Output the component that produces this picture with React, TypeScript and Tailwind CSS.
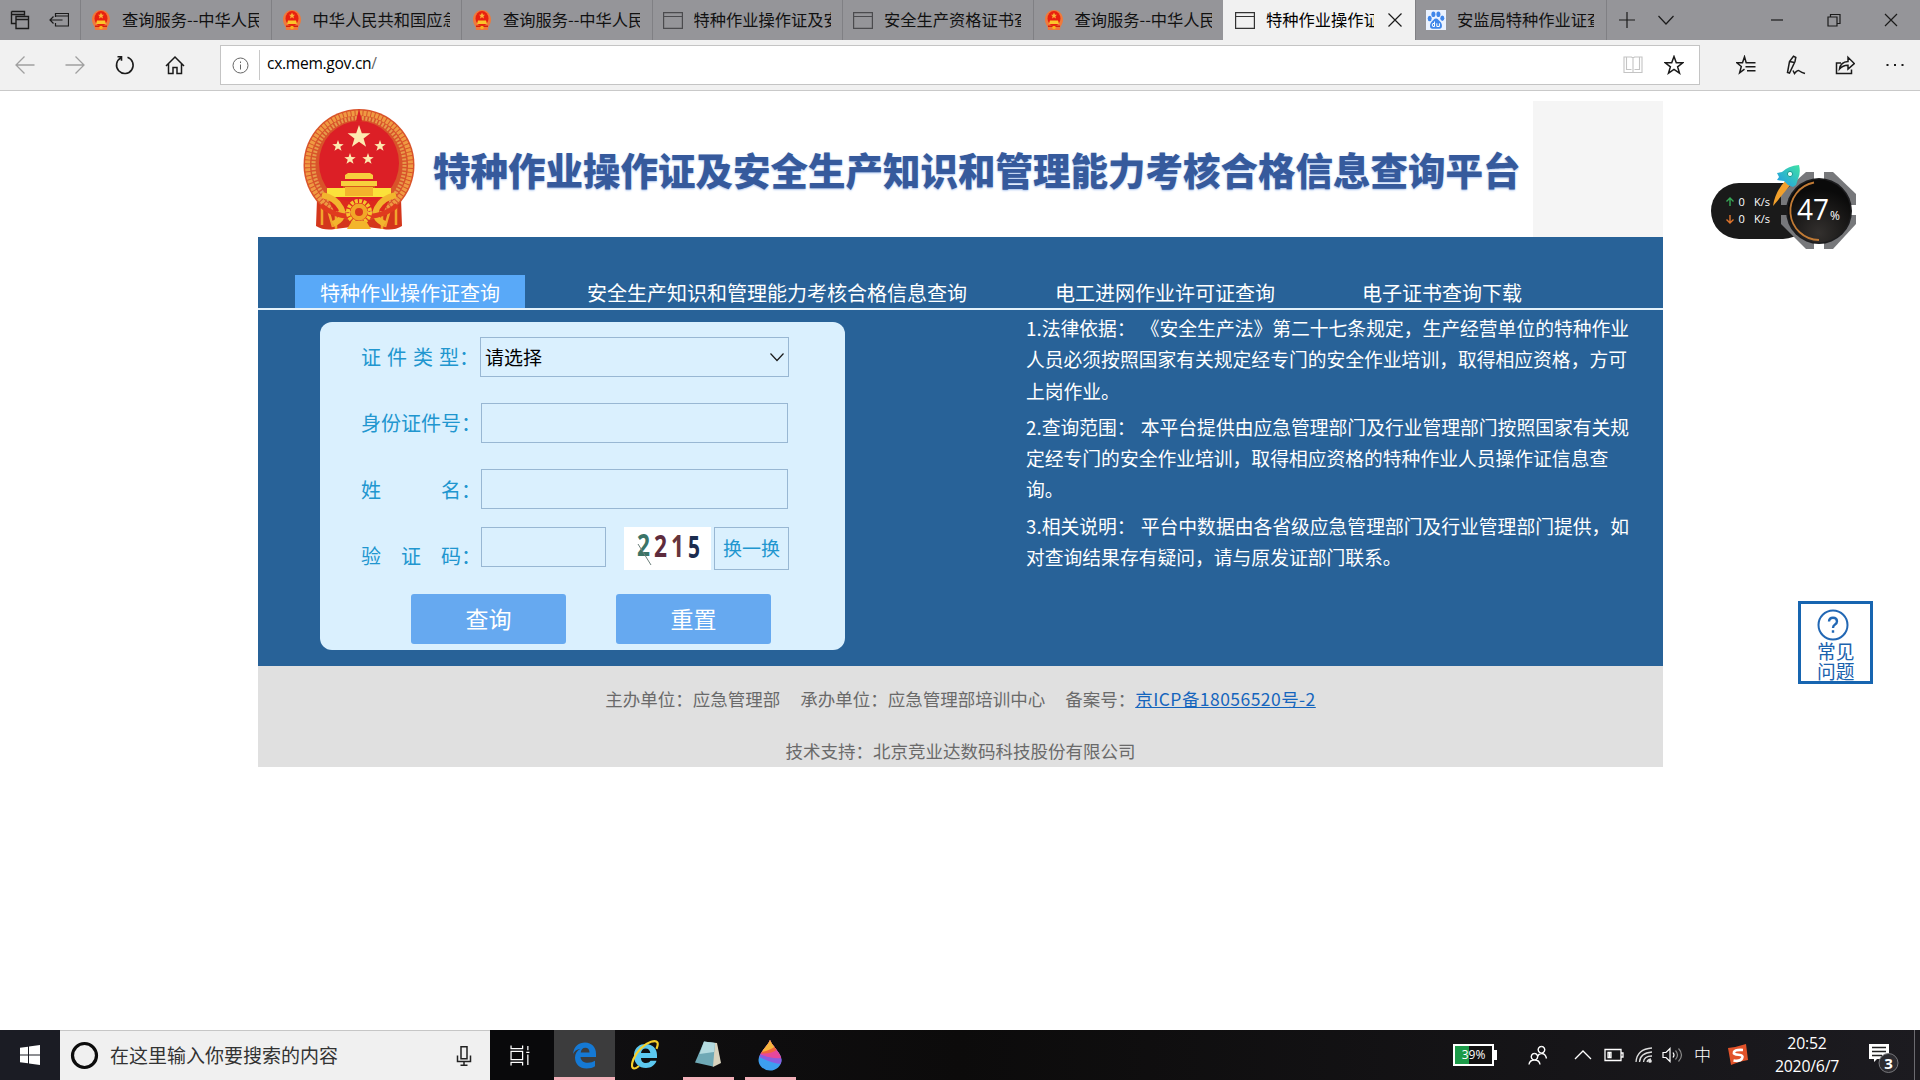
import { useState } from 'react';
import type { ReactNode } from 'react';

type TabIcon = 'emblem' | 'page' | 'baidu';

interface BrowserTab {
  title: string;
  icon: TabIcon;
  active?: boolean;
}

const browserTabs: BrowserTab[] = [
  { title: '查询服务--中华人民', icon: 'emblem' },
  { title: '中华人民共和国应急', icon: 'emblem' },
  { title: '查询服务--中华人民', icon: 'emblem' },
  { title: '特种作业操作证及安', icon: 'page' },
  { title: '安全生产资格证书查', icon: 'page' },
  { title: '查询服务--中华人民', icon: 'emblem' },
  { title: '特种作业操作证', icon: 'page', active: true },
  { title: '安监局特种作业证查', icon: 'baidu' },
];

const notices = [
  ['1.法律依据： 《安全生产法》第二十七条规定，生产经营单位的特种作业', '人员必须按照国家有关规定经专门的安全作业培训，取得相应资格，方可', '上岗作业。'],
  ['2.查询范围： 本平台提供由应急管理部门及行业管理部门按照国家有关规', '定经专门的安全作业培训，取得相应资格的特种作业人员操作证信息查', '询。'],
  ['3.相关说明： 平台中数据由各省级应急管理部门及行业管理部门提供，如', '对查询结果存有疑问，请与原发证部门联系。'],
];

const STAR = 'M0,-10 L2.35,-3.2 9.5,-3.1 3.8,1.2 5.9,8.1 0,4 -5.9,8.1 -3.8,1.2 -9.5,-3.1 -2.35,-3.2Z';

function SmallEmblem() {
  return (
    <svg width="20" height="20" viewBox="0 0 20 20">
      <path d="M10 0C4.500 0 1 4.500 1 9.500c0 3 1.200 5.500 2.500 7L4 20h12l.5-3.500c1.300-1.500 2.500-4 2.500-7C19 4.500 15.500 0 10 0z" fill="#ef7a3c" />
      <ellipse cx="10" cy="8.500" rx="6.500" ry="7.500" fill="#e8200f" />
      <path d="M10 2.500l1 2.200h2l-1.600 1.500.6 2.200-2-1.200-2 1.200.6-2.200L7 4.700h2z" fill="#fbb338" />
      <path d="M6 10.500h8l1 3.500H5z" fill="#fbc52c" />
      <path d="M4 15.500h12v1.500H4z" fill="#d81f0a" />
      <circle cx="10" cy="17.500" r="1.800" fill="#f9b21e" />
    </svg>
  );
}

function Emblem() {
  return (
    <svg width="112" height="122" viewBox="0 0 112 122" className="shrink-0">
      <path d="M14 90L13 117q8 5 19 3l24-3 24 3q11 2 19-3l-1-27z" fill="#d4361c" />
      <path d="M19 98v18M24 97l6 21M33 106v14M93 98v18M88 97l-6 21M79 106v14" stroke="#f2a52d" strokeWidth="2.500" />
      <ellipse cx="56" cy="56" rx="55.500" ry="56" fill="#d9532a" />
      <ellipse cx="56" cy="56" rx="51.500" ry="52" fill="none" stroke="#ef9a42" strokeWidth="5" strokeDasharray="3 1" />
      <ellipse cx="56" cy="56" rx="45.500" ry="47" fill="none" stroke="#e79a4a" strokeWidth="4" strokeDasharray="2 1.500" />
      <ellipse cx="56" cy="54" rx="40" ry="42" fill="#dc1f26" />
      <path d="M56 0l3 12h-6z" fill="#dc1f26" />
      <g fill="#fdeab0">
        <path d={STAR} transform="translate(56,28) scale(1.200)" />
        <path d={STAR} transform="translate(35,37) scale(.6)" />
        <path d={STAR} transform="translate(77,37) scale(.6)" />
        <path d={STAR} transform="translate(47,50) scale(.6)" />
        <path d={STAR} transform="translate(65,50) scale(.6)" />
      </g>
      <path d="M42 66l3-2h22l3 2v4H42zM38 72h36v5H38z" fill="#f7cf3d" />
      <path d="M40 77h32v3H40z" fill="#d8591b" />
      <path d="M24 79h64v9H24z" fill="#fbe13a" />
      <path d="M42 78h28v9H42z" fill="#f3b22c" />
      <path d="M24 88l32 6 32-6-7 14H31z" fill="#dc2a1d" />
      <path d="M19 86q14 3 19 13T30 115M93 86q-14 3-19 13t8 16" fill="none" stroke="#f2b52e" strokeWidth="6" />
      <path d="M18 96q12 12 38 12t38-12" fill="none" stroke="#e03a1e" strokeWidth="5" />
      <circle cx="56" cy="103" r="11" fill="none" stroke="#f6c62e" strokeWidth="4" strokeDasharray="3 1.300" />
      <circle cx="56" cy="103" r="8.500" fill="#f1a727" />
      <circle cx="56" cy="103" r="4" fill="#d93a1b" />
      <path d="M49 112l-5 8h24l-5-8z" fill="#f3b52b" />
    </svg>
  );
}

function PageIcon({ active }: { active?: boolean }) {
  return (
    <svg width="20" height="18" viewBox="0 0 20 18" fill="none" stroke={active ? '#333' : '#4b4b4e'} strokeWidth="1.200">
      <path d="M.6 1.600h18.800v15.800H.6zM.6 5.500h18.800" />
    </svg>
  );
}

function BaiduIcon() {
  return (
    <svg width="20" height="20" viewBox="0 0 20 20">
      <rect width="20" height="20" fill="#eaf2ff" />
      <g fill="#3f86ea">
        <ellipse cx="3.700" cy="8.500" rx="2" ry="2.700" />
        <ellipse cx="7.400" cy="4.300" rx="2" ry="2.800" />
        <ellipse cx="12.400" cy="4.300" rx="2" ry="2.800" />
        <ellipse cx="16.300" cy="8.300" rx="2" ry="2.700" />
        <path d="M10 8.500c-2 0-2.800 2-4.500 3.600S3 18.800 6.500 18.800h7c3.500 0 2.700-5 1-6.700S12 8.500 10 8.500z" />
      </g>
      <path d="M8.500 11.500v5H6.800q-1.200-1.500 0-3h1.700M10.800 13.300v3.200h2.600v-3.200" fill="none" stroke="#fff" />
    </svg>
  );
}

function TabFavicon({ icon, active }: { icon: TabIcon; active?: boolean }) {
  if (icon === 'emblem') return <SmallEmblem />;
  if (icon === 'baidu') return <BaiduIcon />;
  return <PageIcon active={active} />;
}

/* Line icon on a 20x20 grid */
function Glyph({ d, color = '#1b1b1b', w = 1.3, size = 20 }: { d: string; color?: string; w?: number; size?: number }) {
  return (
    <svg width={size} height={size} viewBox="0 0 20 20" fill="none" stroke={color} strokeWidth={w} className="shrink-0">
      <path d={d} />
    </svg>
  );
}

function TabStrip() {
  return (
    <div className="flex h-10 bg-[#959599]">
      <div className="flex w-20 items-center gap-[19px] pl-[10px]">
        <Glyph d="M1.500 1.500h13v4M1.500 1.500v12h4M1.500 4.500h13M6 6.500h12.500v12H6zM6 9.500h12.500" w={1.4} />
        <Glyph d="M6.500 7V3.500h13v12.500h-13v-3M7 6h12.500M13.500 10H1M4.500 6.500L1 10l3.500 3.500" w={1.2} />
      </div>
      {browserTabs.map((tab, i) => (
        <div
          key={i}
          className={
            tab.active
              ? 'flex w-[192px] shrink-0 items-center bg-[#f1f1f1] pl-[12px]'
              : 'flex w-[190.5px] shrink-0 items-center border-l border-[#808084] pl-[10px]'
          }
        >
          <span className="w-5 shrink-0"><TabFavicon icon={tab.icon} active={tab.active} /></span>
          <span
            className={
              tab.active
                ? 'ml-[11px] w-[108px] overflow-hidden whitespace-nowrap pb-[2px] text-[16.25px] leading-[24px] text-black'
                : 'ml-[11px] w-[137px] overflow-hidden whitespace-nowrap pb-[2px] text-[16.25px] leading-[24px] text-[#111]'
            }
          >
            {tab.title}
          </span>
          {tab.active && <span className="ml-[11px]"><Glyph d="M3.500 3.500l13 13M16.500 3.500l-13 13" w={1.2} /></span>}
        </div>
      ))}
      <div className="flex flex-1 items-center border-l border-[#808084] pl-[10px]">
        <Glyph d="M10 2v16M2 10h16" w={1.2} />
        <span className="ml-[19px]"><Glyph d="M2.500 6l7.500 8 7.500-8" w={1.2} /></span>
        <span className="ml-[91px]"><Glyph d="M4 10h12" w={1.2} /></span>
        <span className="ml-[37px]"><Glyph d="M4 7h9v9H4zM6.500 7V4.500H16V13.500h-3" w={1.2} /></span>
        <span className="ml-[37px]"><Glyph d="M4 4l12 12M16 4L4 16" w={1.2} /></span>
      </div>
    </div>
  );
}

function Toolbar() {
  return (
    <div className="flex h-[51px] items-center border-b border-[#c9c9c9] bg-[#f1f1f1]">
      <div className="flex w-[220px] items-center gap-[30px] pl-[15px]">
        <Glyph d="M19.500 10H1M9.500 1.500L1 10l8.500 8.500" color="#a0a0a0" />
        <Glyph d="M.5 10H19M10.500 1.500L19 10l-8.500 8.500" color="#a0a0a0" />
        <Glyph d="M12.500 2.300a8.300 8.300 0 1 1-6.500 .5M2.500 1.800h4v4" w={1.6} />
        <Glyph d="M1 11l9-9 9 9M3.500 9v9.500h4.500v-6h4v6h4.500V9" w={1.5} />
      </div>
      <div className="flex h-[40px] w-[1480px] items-center border border-[#c4c4c4] bg-white pl-[11px]">
        <svg width="17" height="17" viewBox="0 0 17 17" fill="none" stroke="#666" className="shrink-0">
          <circle cx="8.500" cy="8.500" r="7.500" />
          <path d="M8.500 7.500v5M8.500 4.500v1.500" />
        </svg>
        <div className="ml-[10px] h-[30px] w-px bg-[#c8c8c8]" />
        <span className="ml-[7px] flex-1 pb-[5px] font-['Open_Sans','Noto_Sans',sans-serif] text-[15.6px] leading-[20px] tracking-[-0.3px] text-black">
          cx.mem.gov.cn<span className="text-[#666]">/</span>
        </span>
        <Glyph d="M1 2h7.500l1.500 1 1.500-1H19v15.500H1zM10 3v14.500M3.500 2v12.500h5M16.500 2v12.500h-5" color="#c4c4c4" w={1.1} />
        <span className="ml-[21px] mr-[15px]">
          <Glyph d="M10 1.500l2.300 6.200 6.500.1-5.200 4 1.900 6.300L10 14.400 4.500 18.100l1.900-6.300-5.200-4 6.500-.1z" w={1.5} />
        </span>
      </div>
      <div className="flex items-center gap-[29.500px] pl-[36px]">
        <Glyph d="M12 7.700h-1.800L8.500 1.800 6.500 7.700H.8l4.500 3.800-1.700 6.300 4.900-3.600M11 7.700h8.500M9.500 11.700h10M11 15.700h8.500" w={1.5} />
        <Glyph d="M1.500 17.500L3.500 6.500 7.500 1.200l2.300 1.300-.8 4L3.500 18l-2-.5zM3.500 6.500l5 1M7 15.500l1.500 3q3-4 5-2.500t5.500 2.500" w={1.5} />
        <Glyph d="M6 8H1.500v10.500h15v-4M4.500 14q1-7 8.500-7.500V2.300L19.300 8.500 13 14v-3.800Q8 10 4.500 14z" w={1.5} />
        <Glyph d="M1.500 10h2M9 10h2M16.500 10h2" w={2} />
      </div>
    </div>
  );
}

function FormRow({ label, wide, children, className }: { label: string; wide?: boolean; children: ReactNode; className: string }) {
  return (
    <div className={`flex ${className}`}>
      <div className="flex w-[120px] shrink-0 items-center text-[20px] leading-[28px] text-[#2196cf]">
        <span className={wide ? 'flex w-[98px] justify-between' : 'flex w-[100px] justify-between'}>
          {label.split('').map((c) => <span key={c}>{c}</span>)}
        </span>
        <span className="w-5">：</span>
      </div>
      {children}
    </div>
  );
}

function QueryForm() {
  const [idNo, setIdNo] = useState('');
  const [name, setName] = useState('');
  const [code, setCode] = useState('');

  const reset = () => {
    setIdNo('');
    setName('');
    setCode('');
  };

  return (
    <form className="ml-[62px] mt-[12px] h-[328px] w-[525px] rounded-[12px] bg-[#daf0fe] pl-[41px] pt-[15px]" onSubmit={(e) => e.preventDefault()}>
      <FormRow label="证件类型" wide className="h-[40px]">
        <div className="-ml-px flex w-[309px] items-center justify-between border border-[#98b7d3] pl-[4px] pr-[1px] text-[19px] text-black">
          <span>请选择</span>
          <Glyph d="M3.500 6.500L10 13.500l6.500-7" w={1.2} />
        </div>
      </FormRow>
      <FormRow label="身份证件号" className="mt-[26px] h-[40px]">
        <input value={idNo} onChange={(e) => setIdNo(e.target.value)} className="w-[307px] border border-[#98b7d3] px-2" />
      </FormRow>
      <FormRow label="姓名" className="mt-[26px] h-[40px] *:first:pt-[2px]">
        <input value={name} onChange={(e) => setName(e.target.value)} className="w-[307px] border border-[#98b7d3] px-2" />
      </FormRow>
      <FormRow label="验证码" className="mt-[18px] h-[43px] *:first:pt-[14px]">
        <input value={code} onChange={(e) => setCode(e.target.value)} className="h-[40px] w-[125px] border border-[#98b7d3] px-2" />
        <svg width="87" height="43" viewBox="0 0 87 43" className="ml-[18px] shrink-0 font-['Noto_Sans',sans-serif] text-[30px] font-bold">
          <rect width="87" height="43" fill="#fff" />
          <text x="13" y="29" fill="#3b7467" textLength="13" lengthAdjust="spacingAndGlyphs">2</text>
          <text x="30" y="30" fill="#5e2c3d" textLength="13" lengthAdjust="spacingAndGlyphs">2</text>
          <text x="47" y="30" fill="#66343b" textLength="13" lengthAdjust="spacingAndGlyphs">1</text>
          <text x="64" y="31" fill="#1b2c4e" textLength="12" lengthAdjust="spacingAndGlyphs">5</text>
          <path d="M14 17l13 21" stroke="#6c7f7b" />
        </svg>
        <button type="button" className="ml-[3px] w-[75px] border border-[#98b7d3] text-[19px] text-[#2196cf]">换一换</button>
      </FormRow>
      <div className="mt-[24px] flex gap-[50px] pl-[50px] text-[23px] text-white">
        <button type="submit" className="h-[50px] w-[155px] rounded-[3px] bg-[#66a9f0] pb-[1px]">查询</button>
        <button type="button" onClick={reset} className="h-[50px] w-[155px] rounded-[3px] bg-[#66a9f0] pb-[1px]">重置</button>
      </div>
    </form>
  );
}

function Portal() {
  return (
    <div className="ml-[258px] mt-[10px] w-[1405px]">
      <header className="flex h-[136px]">
        <div className="ml-[45px] mt-[8px]"><Emblem /></div>
        <h1 className="ml-[18px] mt-[40px] w-[1100px] whitespace-nowrap text-[37.5px] font-black leading-[56px] text-[#365a9c] [text-shadow:0_1px_2px_#a9c3ee]">
          特种作业操作证及安全生产知识和管理能力考核合格信息查询平台
        </h1>
        <div className="ml-auto w-[130px] bg-[#f5f5f5]" />
      </header>

      <main className="h-[429px] bg-[#286298]">
        <nav className="flex h-[73px] items-end border-b-2 border-[#e4f1fa] pl-[37px] text-[20px] text-white">
          <a className="h-[33px] w-[230px] bg-[#59a9f8] text-center leading-[35px]">特种作业操作证查询</a>
          <a className="ml-[62px] h-[33px] leading-[35px]">安全生产知识和管理能力考核合格信息查询</a>
          <a className="ml-[88px] h-[33px] leading-[35px]">电工进网作业许可证查询</a>
          <a className="ml-[87px] h-[33px] leading-[35px]">电子证书查询下载</a>
        </nav>
        <div className="flex">
          <QueryForm />
          <div className="ml-[181px] mt-[2px] text-[18.8px] leading-[31.250px] text-white [word-spacing:1px]">
            {notices.map((lines, i) => (
              <p key={i} className="mb-[5px]">
                {lines.map((line) => <span key={line} className="block whitespace-nowrap">{line}</span>)}
              </p>
            ))}
          </div>
        </div>
      </main>

      <footer className="h-[101px] bg-[#e0e0e0] pt-[20px] text-center text-[17.5px] leading-[26px] text-[#6a6a6a]">
        <p className="flex justify-center gap-[20px]">
          <span>主办单位：应急管理部</span>
          <span>承办单位：应急管理部培训中心</span>
          <span>备案号：<a className="tracking-[0.45px] text-[#1565bd] underline">京ICP备18056520号-2</a></span>
        </p>
        <p className="mt-[26px]">技术支持：北京竞业达数码科技股份有限公司</p>
      </footer>
    </div>
  );
}

function SpeedWidget() {
  return (
    <svg width="160" height="100" viewBox="0 0 160 100" className="absolute left-[1705px] top-[160px] font-['Open_Sans','Noto_Sans',sans-serif]">
      <defs>
        <radialGradient id="dial" cx="50%" cy="85%" r="70%">
          <stop offset="0" stopColor="#33302e" />
          <stop offset="1" stopColor="#0a0a0a" />
        </radialGradient>
        <linearGradient id="rocket" x1="0" y1="1" x2="1" y2="0">
          <stop offset="0" stopColor="#2196e8" />
          <stop offset="1" stopColor="#3fe3a4" />
        </linearGradient>
      </defs>
      <rect x="6" y="23" width="100" height="56" rx="28" fill="#1a1a1a" />
      <path d="M101 12h27l23 22v30l-23 25h-27L76 64V34z" fill="#77787b" />
      <path d="M109 11v14h10V11zM109 77v13h10V77zM143 45h10v10h-10z" fill="#fff" />
      <path d="M75 45h9v10h-9z" fill="#1a1a1a" />
      <circle cx="114" cy="51" r="33" fill="#1c1c1e" />
      <circle cx="114" cy="51" r="31.500" fill="url(#dial)" />
      <path d="M109 22.500A29 29 0 0 0 114 80" fill="none" stroke="#c07a35" strokeWidth="1.800" />
      <path d="M82 19l4 5Q79 33 68 46 70 31 82 19z" fill="#f1a02c" />
      <path d="M94 5Q83 6 77 12l-5 1 2 4-2 3 7 1 4 4 5 2 3-2 2-6Q96 13 94 5z" fill="url(#rocket)" />
      <circle cx="85" cy="14" r="2.600" fill="#e8fff9" stroke="#169c91" />
      <path d="M25 46V38M21.500 41.500L25 38l3.500 3.500" stroke="#37a856" strokeWidth="1.400" fill="none" />
      <path d="M25 55v8M21.500 59.500L25 63l3.500-3.500" stroke="#e0752c" strokeWidth="1.400" fill="none" />
      <g fill="#fff" className="text-[11px]">
        <text x="33.500" y="46">0</text>
        <text x="49" y="46">K/s</text>
        <text x="33.500" y="63">0</text>
        <text x="49" y="63">K/s</text>
      </g>
      <text x="92" y="60" fill="#fff" className="text-[29px]" textLength="32" lengthAdjust="spacingAndGlyphs">47</text>
      <text x="125" y="60" fill="#fff" className="text-[12px]">%</text>
    </svg>
  );
}

function FaqButton() {
  return (
    <div className="absolute left-[1798px] top-[601px] h-[83px] w-[75px] border-[3px] border-[#1765b0] bg-white pl-[16px] pt-[5px] text-[18.75px] leading-[19.500px] text-[#1b62ad]">
      <svg width="32" height="32" viewBox="0 0 32 32" fill="none" stroke="#2167b4" strokeWidth="2">
        <circle cx="16" cy="16" r="14.500" />
        <path d="M12 12.500q.2-3.700 4-3.700t4 3.500q0 2-2 3.200t-2 3.500M16 21.200v2.600" strokeWidth="2.400" />
      </svg>
      <div className="w-10">常见问题</div>
    </div>
  );
}

function Taskbar() {
  return (
    <div className="flex h-[50px] items-center bg-gradient-to-r from-[#16151a] via-[#0c0b0b] to-[#1c1b20]">
      <div className="flex h-full w-[60px] items-center justify-center bg-[#1b1c24]">
        <svg width="20" height="20" viewBox="0 0 20 20" fill="#fff">
          <path d="M0 2.800L8 1.700v7.800H0zM9 1.500L20 0v9.500H9zM0 10.500h8v7.800l-8-1.100zM9 10.500h11V20L9 18.500z" />
        </svg>
      </div>
      <div className="flex h-full w-[430px] items-center border-t border-[#c6c6c6] bg-[#f0f0f0] pl-[10px]">
        <svg width="29" height="29" viewBox="0 0 29 29"><circle cx="14.500" cy="14.500" r="12" fill="none" stroke="#0c0c0c" strokeWidth="3.200" /></svg>
        <span className="ml-[11px] flex-1 pb-[2px] text-[19px] leading-[28px] text-[#333]">在这里输入你要搜索的内容</span>
        <span className="mr-[16px]"><Glyph d="M7 .8h6v12H7zM3.500 9.500v6h13v-6M10 15.500v4M6.500 19.200h7" color="#222" w={1.5} /></span>
      </div>
      <div className="flex h-full w-[64px] items-center bg-[#09090b] pl-[20px]">
        <Glyph d="M1 .5V3.500h11V.5M1 6h11v8H1zM1 19.500v-3h11v3M17 1v4M17 9v10M15.500 7h3" color="#fff" w={1.2} size={21} />
      </div>
      <div className="flex h-full w-[61px] items-center justify-center border-b-[3px] border-[#f2b0b9] bg-[#3c3c3d] pt-[3px]">
        <svg width="25" height="27" viewBox="0 0 25 27" fill="#1579d4">
          <path d="M1 12C2 4 7 .5 13 .5c7 0 11 5 11 11V15H8.500c.3 4 3.500 5.800 7.300 5.800 3 0 5.200-.8 7.200-2v5.400c-2 1.300-5 2.300-8.500 2.300C7.500 26.500 3 22 3 15.500c0-4 2.300-7 5.500-8.700C4.500 7.200 2.300 9.500 1 12zm7.700-1.500h8.800c0-3-1.500-4.700-4.200-4.700-2.500 0-4.200 1.900-4.600 4.700z" />
        </svg>
      </div>
      <div className="flex h-full w-[61px] items-center justify-center">
        <svg width="29" height="30" viewBox="0 0 29 30">
          <path d="M3 14C4 7 9 4 14.500 4 22 4 26 9 26 15v3H10c0 3 2 5 5 5 2 0 3.500-.7 4.500-2.200h6C24 25.500 20 28 15 28 8 28 3.500 23.500 3 17zm7-1h9.300c-.2-2.700-2-4.500-4.600-4.500S10.300 10.300 10 13z" fill="#5cc8f0" />
          <path d="M8 26C2 31-1 28 2.500 19 6 11 13 4 20 1.800c7-2 8 1 5.500 7" fill="none" stroke="#f6cf2b" strokeWidth="2.200" />
        </svg>
      </div>
      <div className="ml-[7px] flex h-full w-[51px] items-center justify-center border-b-[3px] border-[#f2b0b9] pt-[1px] pr-[2px]">
        <svg width="28" height="28" viewBox="0 0 28 28">
          <path d="M11 2l12 1 4 20-8 4z" fill="#d8d2bd" />
          <path d="M10 1.500l11 1.500-2 23.500L1 22.500z" fill="#6fa9b6" />
          <path d="M10 1.500l11 1.500-1 9L5.500 14z" fill="#b4dbe0" />
        </svg>
      </div>
      <div className="ml-[11px] flex h-full w-[51px] items-center justify-center border-b-[3px] border-[#f2b0b9] pt-[2px] pr-[2px]">
        <svg width="24" height="32" viewBox="0 0 24 32">
          <defs><clipPath id="drop"><path d="M12 1c2 6 11.500 13 11.500 20A11.500 10.500 0 0 1 .5 21C.5 14 10 7 12 1z" /></clipPath></defs>
          <g clipPath="url(#drop)">
            <rect width="24" height="32" fill="#3d9ff0" />
            <path d="M0 0h24v25Q12 24 0 17z" fill="#8a5de0" />
            <path d="M0 0h24v19Q10 20 0 14z" fill="#e6489c" />
            <path d="M0 0h20v10Q12 16 0 14z" fill="#f0653c" />
            <path d="M6 0h14v5Q14 11 4 13z" fill="#f7b53c" />
          </g>
        </svg>
      </div>

      <div className="ml-auto flex h-full w-[467px] items-center text-white">
        <div className="flex h-[22px] w-[41px] items-center border-2 border-white bg-[linear-gradient(90deg,#1b9a48_38%,#111_38%)] font-['Open_Sans','Noto_Sans',sans-serif] text-[12px]">
          <span className="w-full text-center">39%</span>
        </div>
        <div className="h-[10px] w-[3px] bg-white" />
        <span className="ml-[31px]"><Glyph d="M13.500 1.500a3.300 3.300 0 1 1-.1 0M9.500 12q1-3.500 4-3.500 4 0 5 5M6.500 8.500a3.200 3.200 0 1 1-.1 0M1 19.500q.5-4.500 5.500-4.500t5.500 4.500" color="#fff" w={1.4} /></span>
        <span className="ml-[25px]"><Glyph d="M2 14l8-8 8 8" color="#fff" /></span>
        <span className="ml-[11px]"><Glyph d="M1 4.500h16v11H1zM17 8h2v4h-2M4 7.500h3v5H4zM5.500 7.500v5" color="#fff" /></span>
        <svg width="20" height="20" viewBox="0 0 20 20" fill="none" stroke="#ddd" strokeWidth="1.300" className="ml-[10px]">
          <path d="M2 17Q3 4 18 3M5.500 17Q6 8 18 7M9.500 17q.5-6 8.500-6M13 17q.5-2.500 4-3" />
          <circle cx="16" cy="16" r="1.200" fill="#fff" />
        </svg>
        <svg width="22" height="20" viewBox="0 0 22 20" fill="none" stroke="#fff" strokeWidth="1.200" className="ml-[8px]">
          <path d="M1 7.500h3l4-4v13l-4-4H1zM11 7.500q2 2.500 0 5" />
          <path d="M13.500 5.500q4 4.500 0 9M16.500 3.500q6 6.500 0 13" stroke="#888" />
        </svg>
        <span className="ml-[10px] w-[17px] pb-[2px] text-[17px] font-light">中</span>
        <svg width="22" height="22" viewBox="0 0 22 22" className="ml-[16px]">
          <path d="M1 4q9-1 18-4l2 16q-8 1-17 5z" fill="#e2532a" />
          <path d="M16 6q-8-.5-9 2t4.500 2.800 3.500 3.700-8.500 2" fill="none" stroke="#fff" strokeWidth="2.600" />
        </svg>
        <div className="ml-[17px] w-[82px] text-center font-['Open_Sans','Noto_Sans',sans-serif] text-[15.800px] leading-[23px] tracking-[-0.2px]">
          <div>20:52</div>
          <div>2020/6/7</div>
        </div>
        <svg width="32" height="32" viewBox="0 0 32 32" className="ml-[20px] mt-[4px] font-['Open_Sans','Noto_Sans',sans-serif]">
          <path d="M1 3h20v15H9l-3 3v-3H1z" fill="#fff" />
          <path d="M4 6.500h14M4 10.500h14M4 14.500h10" stroke="#222" strokeWidth="1.300" />
          <circle cx="20.500" cy="22" r="9.500" fill="#2d2c31" stroke="#77777b" />
          <text x="20.500" y="27.500" fill="#fff" textAnchor="middle" className="text-[15px] font-bold">3</text>
        </svg>
        <div className="ml-auto mr-[5px] h-full w-px bg-[#6b6b70]" />
      </div>
    </div>
  );
}

export default function App() {
  return (
    <div className="relative flex h-[1080px] w-[1920px] flex-col overflow-hidden bg-white font-['Noto_Sans_CJK_SC',sans-serif] font-normal">
      <TabStrip />
      <Toolbar />
      <div className="flex-1">
        <Portal />
      </div>
      <Taskbar />
      <SpeedWidget />
      <FaqButton />
    </div>
  );
}
